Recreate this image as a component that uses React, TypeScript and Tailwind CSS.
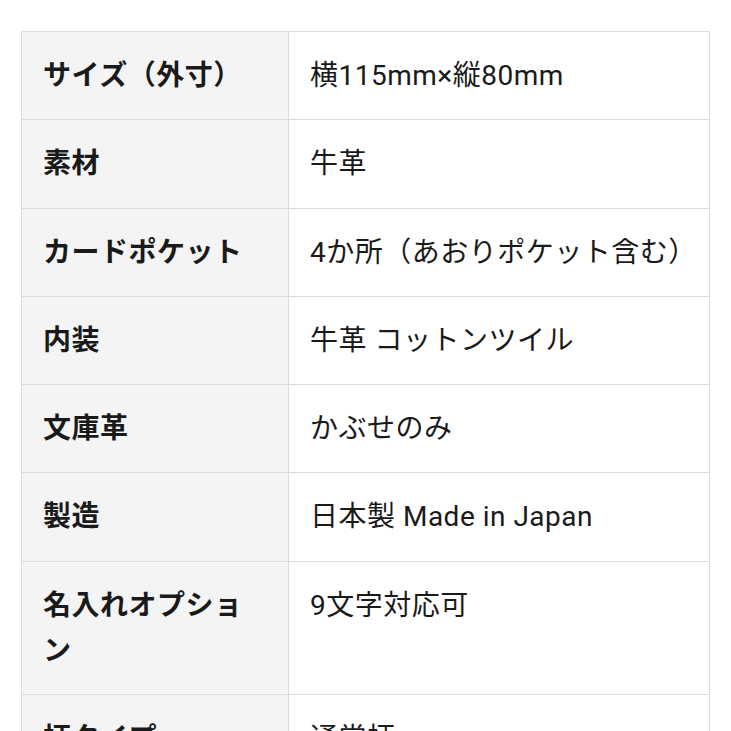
const specs = [
  { label: 'サイズ（外寸）', value: '横115mm×縦80mm' },
  { label: '素材', value: '牛革' },
  { label: 'カードポケット', value: '4か所（あおりポケット含む）' },
  { label: '内装', value: '牛革 コットンツイル' },
  { label: '文庫革', value: 'かぶせのみ' },
  { label: '製造', value: '日本製 Made in Japan' },
  { label: '名入れオプション', value: '9文字対応可' },
  { label: '柄タイプ', value: '通常柄' },
];

export default function App() {
  return (
    <div
      className="w-[731px] h-[731px] overflow-hidden bg-white pt-[31px] pl-[21px]"
      style={{ fontFamily: 'Roboto, "Noto Sans CJK JP", sans-serif' }}
    >
      <table className="w-[689px] table-fixed border-collapse text-[28px] tracking-[0.5px] leading-[45.3px] text-[#1a1a1a]">
        <colgroup>
          <col className="w-[267px]" />
          <col />
        </colgroup>
        <tbody>
          {specs.map((s) => (
            <tr key={s.label}>
              <th className="border border-[#dcdcdc] bg-[#f4f4f4] px-[21px] py-[21px] text-left align-top font-bold">
                {s.label}
              </th>
              <td className="border border-[#dcdcdc] px-[21px] py-[21px] align-top font-normal">
                {s.value}
              </td>
            </tr>
          ))}
        </tbody>
      </table>
    </div>
  );
}
